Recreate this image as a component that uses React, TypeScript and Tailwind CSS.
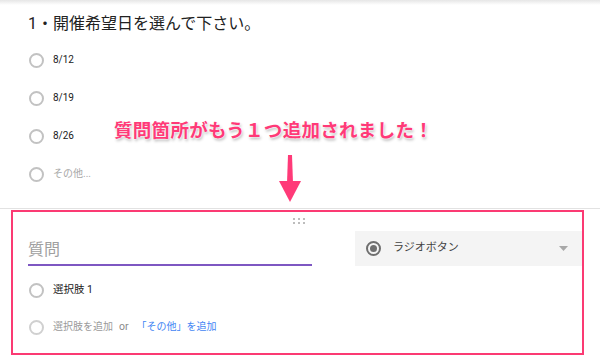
import React from 'react';

const font = "font-['Roboto','Noto_Sans_CJK_JP',sans-serif]";

function Radio({ muted }: { muted?: boolean }) {
  return (
    <span
      className={`inline-block w-[15px] h-[15px] rounded-full border-2 shrink-0 ${
        muted ? 'border-[#d0d0d0]' : 'border-[#c2c2c2]'
      }`}
    />
  );
}

function OptionRow({ children }: { children: React.ReactNode }) {
  return (
    <div className="flex items-center h-[38px] pl-[29px] gap-[9px]">
      <Radio />
      <span className="text-[10px] leading-none">{children}</span>
    </div>
  );
}

export default function App() {
  const dates = ['8/12', '8/19', '8/26'];

  return (
    <div className={`relative w-[600px] h-[364px] overflow-hidden bg-white ${font}`}>
      {/* first question card */}
      <div className="relative h-[209px] border-b border-[#e2e2e2]">
        <div className="absolute inset-x-0 top-0 h-[5px] bg-gradient-to-b from-[#e6e6e6] to-white" />
        <div className="pt-[12px] pl-[28px] text-[16px] leading-[24px] text-[#212121]">
          1・開催希望日を選んで下さい。
        </div>
        <div className="mt-[5px] text-[#212121]">
          {dates.map((d) => (
            <OptionRow key={d}>{d}</OptionRow>
          ))}
          <OptionRow>
            <span className="text-[#a8a8a8]">その他...</span>
          </OptionRow>
        </div>
      </div>

      {/* new question card, highlighted */}
      <div className="mt-[1px] ml-[11px] w-[573px] h-[145px] border-2 border-[#fb3a73]">
        <div className="flex justify-center pt-[6px] pl-[3px]">
          <svg width="12" height="6" viewBox="0 0 12 6">
            {[1, 6, 11].map((x) =>
              [1, 5].map((y) => <rect key={`${x}-${y}`} x={x - 1} y={y - 1} width="2" height="2" fill="#bdbdbd" />)
            )}
          </svg>
        </div>
        <div className="flex items-start mt-[7px]">
          <div className="ml-[15px] w-[284px] h-[35px] flex items-end pb-[4px] border-b-2 border-[#7e57c2]">
            <span className="text-[16px] leading-[20px] text-[#a0a0a0]">質問</span>
          </div>
          <div className="ml-[43px] flex-1 h-[35px] bg-[#f4f4f4] flex items-center pl-[11px] pr-[14px]">
            <span className="w-[15px] h-[15px] rounded-full border-2 border-[#6f6f6f] flex items-center justify-center">
              <span className="w-[7px] h-[7px] rounded-full bg-[#6f6f6f]" />
            </span>
            <span className="ml-[12px] text-[11px] text-[#424242]">ラジオボタン</span>
            <svg className="ml-auto" width="9" height="5" viewBox="0 0 9 5">
              <path d="M0 0h9L4.5 5z" fill="#a8a8a8" />
            </svg>
          </div>
        </div>
        <div className="mt-[5px]">
          <div className="flex items-center h-[38px] pl-[16px] gap-[9px]">
            <Radio />
            <span className="text-[10.5px] leading-none text-[#212121]">選択肢 1</span>
          </div>
          <div className="flex items-center h-[36px] pl-[16px]">
            <Radio muted />
            <span className="ml-[9px] text-[10px] leading-none text-[#9a9a9a]">選択肢を追加</span>
            <span className="ml-[6px] text-[10.5px] leading-none text-[#8a8a8a]">or</span>
            <span className="ml-[8px] text-[10px] leading-none text-[#4285f4]">「その他」を追加</span>
          </div>
        </div>
      </div>

      {/* annotation */}
      <div className="absolute left-[114px] top-[119px] text-[18.5px] leading-[24px] font-bold text-[#ff3a78] tracking-[0.3px] [text-shadow:0_0_2px_#fff,0_0_2px_#fff,1px_2px_3px_rgba(0,0,0,0.3)]">
        質問箇所がもう１つ追加されました！
      </div>
      <svg className="absolute left-[279px] top-[155px]" width="22" height="48" viewBox="0 0 22 48">
        <path d="M9 0h4l1 28h-6z" fill="#ff3a78" />
        <path d="M0 26h22L11 47z" fill="#ff3a78" />
      </svg>
    </div>
  );
}
